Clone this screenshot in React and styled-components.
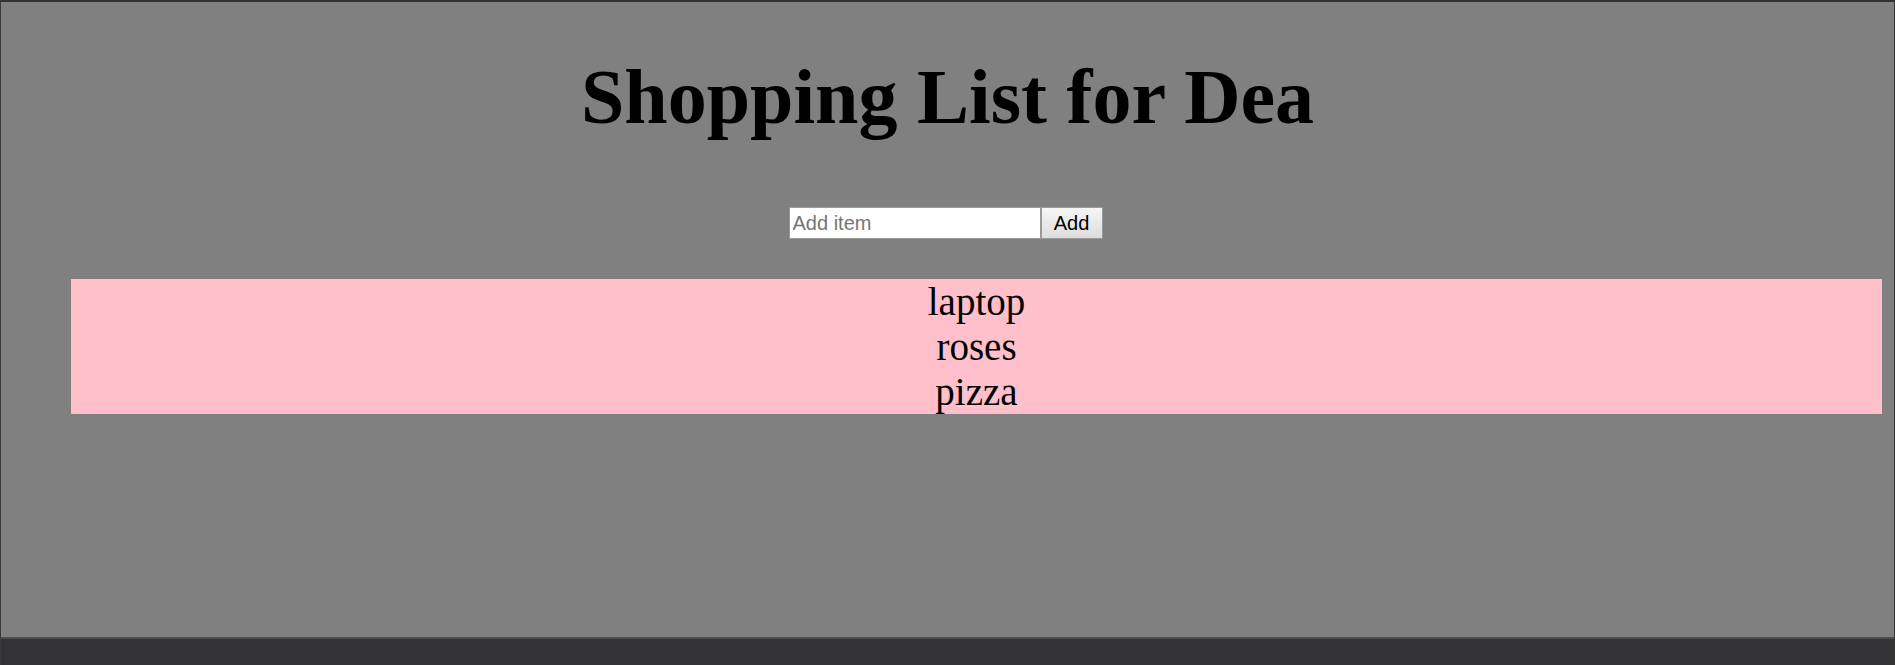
import { useState } from "react";
import styled, { createGlobalStyle } from "styled-components";

const GlobalStyle = createGlobalStyle`
  html, body {
    margin: 0;
    padding: 0;
  }
  body {
    font-family: "Liberation Serif", "Times New Roman", serif;
  }
`;

const Frame = styled.div`
  width: 1895px;
  height: 665px;
  box-sizing: border-box;
  display: flex;
  flex-direction: column;
  background-color: #808080;
  border-top: 2px solid #343434;
  border-left: 1px solid #3a3a3a;
  border-right: 1px solid #343434;
`;

const Main = styled.main`
  flex: 1;
  padding-top: 50px;
  display: flex;
  flex-direction: column;
`;

const Title = styled.h1`
  margin: 0;
  text-align: center;
  font-family: "Liberation Serif", "Times New Roman", serif;
  font-weight: bold;
  font-size: 78px;
  color: #000;
`;

const Form = styled.form`
  display: flex;
  justify-content: center;
  margin-top: 65px;
  padding-right: 4px;
`;

const Input = styled.input`
  width: 252px;
  height: 32px;
  box-sizing: border-box;
  padding: 1px 3px;
  border: 1px solid #9a9a9a;
  background: #fff;
  font-family: "Liberation Sans", Arial, sans-serif;
  font-size: 20px;
  outline: none;
  &::placeholder {
    color: #767676;
  }
`;

const AddButton = styled.button`
  width: 62px;
  height: 32px;
  box-sizing: border-box;
  border: 1px solid #9a9a9a;
  background: linear-gradient(#f6f6f6, #dddddd);
  font-family: "Liberation Sans", Arial, sans-serif;
  font-size: 20px;
  color: #000;
  padding: 0;
`;

const List = styled.ul`
  list-style: none;
  margin: 40px 12px 0 70px;
  padding: 0;
  background-color: pink;
`;

const Item = styled.li`
  text-align: center;
  font-size: 39px;
  line-height: 45px;
  color: #000;
`;

const BottomBar = styled.div`
  height: 28px;
  box-sizing: border-box;
  border-top: 2px solid #4e4e4e;
  background-color: #333335;
`;

export default function App() {
  const [items, setItems] = useState(["laptop", "roses", "pizza"]);
  const [text, setText] = useState("");

  const handleAdd = (e) => {
    e.preventDefault();
    if (!text.trim()) return;
    setItems([...items, text.trim()]);
    setText("");
  };

  return (
    <>
      <GlobalStyle />
      <Frame>
        <Main>
          <Title>Shopping List for Dea</Title>
          <Form onSubmit={handleAdd}>
            <Input
              placeholder="Add item"
              value={text}
              onChange={(e) => setText(e.target.value)}
            />
            <AddButton type="submit">Add</AddButton>
          </Form>
          <List>
            {items.map((item, index) => (
              <Item key={index}>{item}</Item>
            ))}
          </List>
        </Main>
        <BottomBar />
      </Frame>
    </>
  );
}
